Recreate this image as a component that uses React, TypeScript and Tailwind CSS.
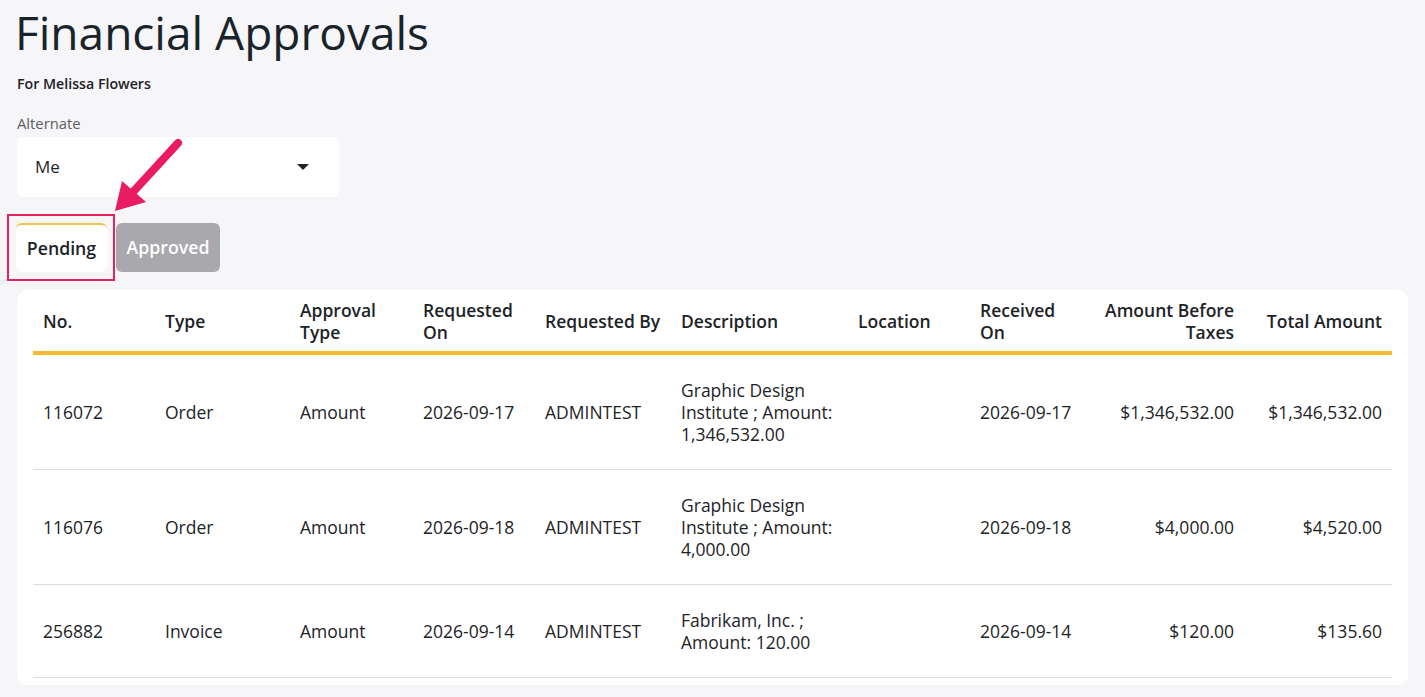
import React from 'react';

interface Approval {
  no: string;
  type: string;
  approvalType: string;
  requestedOn: string;
  requestedBy: string;
  description: string[];
  location: string;
  receivedOn: string;
  amountBeforeTaxes: string;
  totalAmount: string;
}

const rows: Approval[] = [
  {
    no: '116072',
    type: 'Order',
    approvalType: 'Amount',
    requestedOn: '2026-09-17',
    requestedBy: 'ADMINTEST',
    description: ['Graphic Design', 'Institute ; Amount:', '1,346,532.00'],
    location: '',
    receivedOn: '2026-09-17',
    amountBeforeTaxes: '$1,346,532.00',
    totalAmount: '$1,346,532.00',
  },
  {
    no: '116076',
    type: 'Order',
    approvalType: 'Amount',
    requestedOn: '2026-09-18',
    requestedBy: 'ADMINTEST',
    description: ['Graphic Design', 'Institute ; Amount:', '4,000.00'],
    location: '',
    receivedOn: '2026-09-18',
    amountBeforeTaxes: '$4,000.00',
    totalAmount: '$4,520.00',
  },
  {
    no: '256882',
    type: 'Invoice',
    approvalType: 'Amount',
    requestedOn: '2026-09-14',
    requestedBy: 'ADMINTEST',
    description: ['Fabrikam, Inc. ;', 'Amount: 120.00'],
    location: '',
    receivedOn: '2026-09-14',
    amountBeforeTaxes: '$120.00',
    totalAmount: '$135.60',
  },
];

function HeaderCell({ children, right = false }: { children: React.ReactNode; right?: boolean }) {
  return (
    <th
      className={`px-[10px] pt-[9px] pb-[8px] align-middle font-semibold text-[17.5px] leading-[22px] text-[#1d2327] ${
        right ? 'text-right' : 'text-left'
      }`}
    >
      {children}
    </th>
  );
}

function Cell({ children, right = false }: { children: React.ReactNode; right?: boolean }) {
  return (
    <td
      className={`px-[10px] py-[24px] align-middle text-[17.5px] leading-[22px] text-[#1d2327] ${
        right ? 'text-right' : 'text-left'
      }`}
    >
      {children}
    </td>
  );
}

export default function App() {
  return (
    <div
      className="relative min-h-[697px] bg-[#f6f5f8] px-[17px] pb-[11px]"
      style={{ fontFamily: '"Open Sans", "Noto Sans", sans-serif' }}
    >
      <h1 className="-ml-[2px] pt-[4px] text-[46px] leading-[56px] font-normal text-[#18232a]">Financial Approvals</h1>

      <p className="mt-[14px] text-[14.2px] leading-[20px] font-semibold text-[#1d2327]">For Melissa Flowers</p>

      <label className="mt-[19px] block text-[14.8px] leading-[20px] text-[#5b5e62]">Alternate</label>

      <div className="mt-[4px] flex h-[60px] w-[322px] items-center justify-between rounded-[5px] bg-white pl-[18px] pr-[30px]">
        <span className="text-[17px] text-[#1d2327]">Me</span>
        <svg width="12" height="6" viewBox="0 0 12 6" className="text-[#1d2327]">
          <path d="M0 0h12L6 6z" fill="currentColor" />
        </svg>
      </div>

      <div className="mt-[26px] flex gap-[9px]">
        <button className="-ml-[1px] h-[49px] w-[91px] rounded-[6px] border-t-2 border-[#f3c24a] bg-white text-[17.7px] font-semibold text-[#1d2327]">
          Pending
        </button>
        <button className="h-[49px] w-[104px] rounded-[6px] bg-[#a9a8ac] text-[17.7px] font-semibold text-white">
          Approved
        </button>
      </div>

      <div className="mt-[18px] rounded-[10px] bg-white px-[16px] pb-[7px]">
        <table className="w-full table-fixed border-collapse">
          <colgroup>
            <col className="w-[122px]" />
            <col className="w-[135px]" />
            <col className="w-[123px]" />
            <col className="w-[122px]" />
            <col className="w-[136px]" />
            <col className="w-[177px]" />
            <col className="w-[122px]" />
            <col className="w-[118px]" />
            <col className="w-[156px]" />
            <col />
          </colgroup>
          <thead>
            <tr className="border-b-4 border-[#f6bb2a]">
              <HeaderCell>No.</HeaderCell>
              <HeaderCell>Type</HeaderCell>
              <HeaderCell>
                Approval
                <br />
                Type
              </HeaderCell>
              <HeaderCell>
                Requested
                <br />
                On
              </HeaderCell>
              <HeaderCell>Requested By</HeaderCell>
              <HeaderCell>Description</HeaderCell>
              <HeaderCell>Location</HeaderCell>
              <HeaderCell>
                Received
                <br />
                On
              </HeaderCell>
              <HeaderCell right>
                Amount Before
                <br />
                Taxes
              </HeaderCell>
              <HeaderCell right>Total Amount</HeaderCell>
            </tr>
          </thead>
          <tbody>
            {rows.map((r) => (
              <tr key={r.no} className="border-b border-[#dcdcdc]">
                <Cell>{r.no}</Cell>
                <Cell>{r.type}</Cell>
                <Cell>{r.approvalType}</Cell>
                <Cell>{r.requestedOn}</Cell>
                <Cell>{r.requestedBy}</Cell>
                <Cell>
                  {r.description.map((line) => (
                    <div key={line} className="whitespace-nowrap">
                      {line}
                    </div>
                  ))}
                </Cell>
                <Cell>{r.location}</Cell>
                <Cell>{r.receivedOn}</Cell>
                <Cell right>{r.amountBeforeTaxes}</Cell>
                <Cell right>{r.totalAmount}</Cell>
              </tr>
            ))}
          </tbody>
        </table>
      </div>

      {/* callout: highlight box + arrow over the Pending tab */}
      <div className="pointer-events-none absolute left-[7px] top-[214px] h-[67px] w-[108px] border-2 border-[#e3245f]" />
      <svg
        className="pointer-events-none absolute left-0 top-0"
        width="200"
        height="220"
        viewBox="0 0 200 220"
      >
        <line x1="178" y1="143" x2="133" y2="192" stroke="#e91c63" strokeWidth="8" strokeLinecap="round" />
        <path d="M115 211 L122 181 L146 202 Z" fill="#e91c63" />
      </svg>
    </div>
  );
}
